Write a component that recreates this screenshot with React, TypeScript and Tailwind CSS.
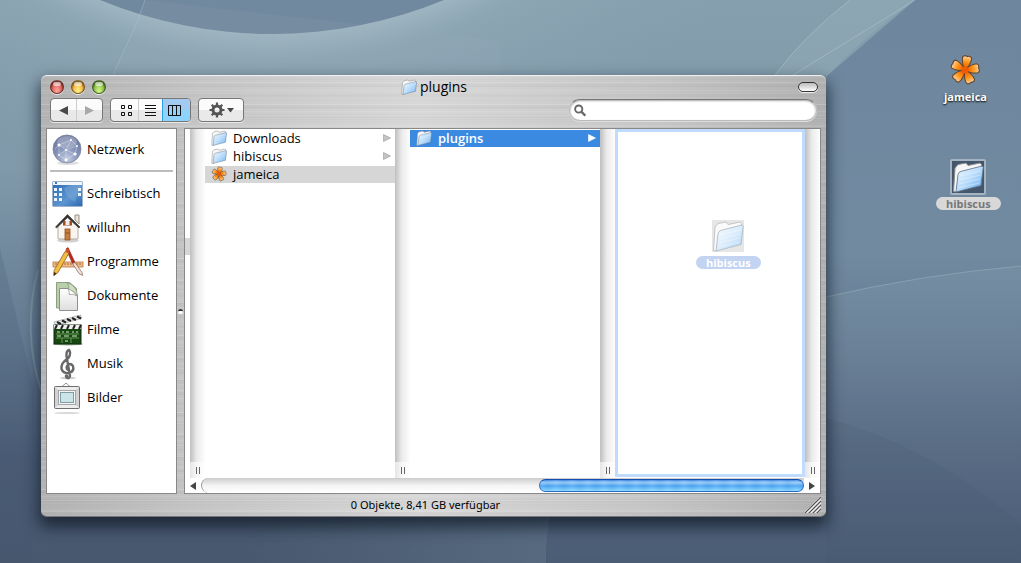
import { useState } from "react";
import type { ReactNode } from "react";

const FolderIcon = ({ size = 16 }: { size?: number }) => (
  <svg width={size} height={size} viewBox="0 0 32 32">
    <defs>
      <linearGradient id="folderFront" x1="0" y1="0" x2="1" y2="1">
        <stop offset="0" stopColor="#f2faff" />
        <stop offset="0.5" stopColor="#b9dcfb" />
        <stop offset="1" stopColor="#5fa9f2" />
      </linearGradient>
    </defs>
    <path
      d="M1.500 30.500L3 7l3-3.500 8-1.500 2 2.500L28 2l1.500 1.500V7L4 31z"
      fill="#f6f6f6"
      stroke="#8b8b8b"
      strokeWidth="1"
    />
    <path
      d="M4 31L6 13.500Q6.500 11 9 10.400L30 5l1.300 1L29 24.500z"
      fill="url(#folderFront)"
      stroke="#66788c"
      strokeWidth="0.9"
    />
    <path
      d="M8 15l21-5M7.500 19l21-5M7 23l21-5M6.500 27l21-5"
      stroke="#fff"
      opacity="0.35"
    />
  </svg>
);

const FlowerIcon = ({ size = 16 }: { size?: number }) => (
  <svg width={size} height={size} viewBox="0 0 32 32">
    <defs>
      <radialGradient
        id="petal"
        gradientUnits="userSpaceOnUse"
        cx="16"
        cy="16"
        r="15"
      >
        <stop offset="0" stopColor="#e84a00" />
        <stop offset="0.55" stopColor="#ff9417" />
        <stop offset="1" stopColor="#ffd9b0" />
      </radialGradient>
    </defs>
    {[10, 82, 154, 226, 298].map((angle) => (
      <path
        key={angle}
        d="M16 17C13 12 11 8 11.500 3.500Q12.500 1 16 2.200 19.500 1 20.500 3.500C21 8 19 12 16 17z"
        transform={`rotate(${angle} 16 16)`}
        fill="url(#petal)"
        stroke="#5d4631"
        strokeWidth="1.1"
      />
    ))}
    <circle cx="16" cy="16" r="3.5" fill="#ef5a05" />
  </svg>
);

const NetworkIcon = () => (
  <svg width="32" height="32" viewBox="0 0 32 32">
    <defs>
      <radialGradient id="globe" cx="0.5" cy="0.85" r="0.85">
        <stop offset="0" stopColor="#c3cce2" />
        <stop offset="0.5" stopColor="#8492b8" />
        <stop offset="1" stopColor="#66739c" />
      </radialGradient>
    </defs>
    <ellipse cx="16" cy="29" rx="11" ry="2" fill="#000" opacity="0.12" />
    <circle cx="15" cy="15" r="14" fill="url(#globe)" stroke="#7d849c" strokeWidth="0.8" />
    <ellipse cx="15" cy="8" rx="10" ry="6" fill="#fff" opacity="0.25" />
    <g stroke="#e8edf8" strokeWidth="0.6" fill="none" opacity="0.7">
      <path d="M7 11l12-5 6 6-2 8-9 6-7-5zM7 11l7 5 11-4M14 16l9 4M14 16v10M7 21l7-5M19 6l-5 10M3 15l4-4" />
    </g>
    <g fill="#fff">
      <circle cx="7" cy="11" r="1.6" />
      <circle cx="19" cy="6" r="1.1" />
      <circle cx="25" cy="12" r="1" />
      <circle cx="14" cy="16" r="1.1" />
      <circle cx="23" cy="20" r="1.6" />
      <circle cx="7" cy="21" r="1" />
      <circle cx="14" cy="26" r="1.4" />
    </g>
  </svg>
);

const DesktopIcon = () => (
  <svg width="32" height="32" viewBox="0 0 32 32">
    <defs>
      <linearGradient id="screen" x1="0" y1="0" x2="1" y2="1">
        <stop offset="0" stopColor="#2c68b2" />
        <stop offset="0.6" stopColor="#5c95cf" />
        <stop offset="1" stopColor="#2b68b3" />
      </linearGradient>
    </defs>
    <rect x="0.5" y="3.5" width="30" height="25" rx="1" fill="url(#screen)" stroke="#9db3cb" />
    <path d="M12 10Q22 4 29 8L23 24Q14 20 12 10z" fill="#89b5df" opacity="0.35" />
    <rect x="1" y="4" width="29" height="3" fill="#f2f6fa" />
    <rect x="3" y="4" width="2" height="2" fill="#3977c6" />
    <g fill="#e9f4ff">
      <rect x="2" y="10" width="3" height="3" />
      <rect x="7" y="10" width="3" height="3" />
      <rect x="2" y="15" width="3" height="3" />
      <rect x="7" y="15" width="3" height="3" />
      <rect x="2" y="20" width="3" height="3" />
      <rect x="7" y="20" width="3" height="3" />
      <rect x="26" y="10" width="3" height="3" />
      <rect x="26" y="15" width="3" height="3" />
    </g>
  </svg>
);

const HomeIcon = () => (
  <svg width="32" height="32" viewBox="0 0 32 32">
    <ellipse cx="16" cy="28.500" rx="11" ry="2" fill="#000" opacity="0.18" />
    <path d="M23 3h4v9l-4-4z" fill="#e9e2d8" stroke="#9a9087" />
    <path d="M6 14L16 5l10 9v13H6z" fill="#f8f5f0" stroke="#b5ada4" />
    <path d="M3.500 15L15.500 2.500 28 15l-1 1L15.500 5.500 4.500 16z" fill="#333" stroke="#3b352f" strokeWidth="0.6" />
    <rect x="11" y="9" width="9" height="4.500" fill="#a44a1c" />
    <rect x="13.500" y="9" width="4" height="4" fill="#e8eef2" />
    <rect x="13" y="17" width="5" height="11" fill="#c97c35" stroke="#8f5420" strokeWidth="0.8" />
    <path d="M13 21h5" stroke="#8f5420" />
  </svg>
);

const AppsIcon = () => (
  <svg width="32" height="32" viewBox="0 0 32 32">
    <rect x="1" y="16" width="30" height="5" fill="#f0b985" stroke="#b87b48" strokeWidth="0.8" />
    <path d="M4 17v2M7 17v2M10 17v2M13 17v2M16 17v2M19 17v2M22 17v2M25 17v2M28 17v2" stroke="#8a5a34" strokeWidth="0.8" />
    <path d="M14 3l2-1.500 7 15-2.500 1z" fill="#c3261b" stroke="#7c201a" strokeWidth="0.6" />
    <path d="M20.500 17.500l2.500-1 7 10 .5 3-3.500-2z" fill="#eee6dc" stroke="#8a5b50" strokeWidth="0.7" />
    <path d="M13 5.500l4 1.500L6 26.500l-4 3v-5z" fill="#f3bd45" stroke="#7e5415" strokeWidth="0.7" />
    <path d="M13 5.500l1.500-3 3 1.500-.5 3z" fill="#d5502f" />
    <path d="M2 26l2.500 1.500-3 2.500z" fill="#4a2113" />
  </svg>
);

const DocumentsIcon = () => (
  <svg width="32" height="32" viewBox="0 0 32 32">
    <defs>
      <linearGradient id="sheet" x1="0" y1="0" x2="0" y2="1">
        <stop offset="0" stopColor="#fff" />
        <stop offset="1" stopColor="#dedede" />
      </linearGradient>
    </defs>
    <path d="M4.500 2.500h13l7 6V28h-20z" fill="#b9ceaa" stroke="#8da081" />
    <path d="M7.500 8.500h9l9 7v15h-18z" fill="url(#sheet)" stroke="#909090" />
    <path d="M15 2.500q3 4 1.500 7 5 1 9 6-1-10-10.500-13z" fill="#cfdfc3" stroke="#7f9174" strokeWidth="0.7" />
    <path d="M16 8.500q2 4 1 6 4-1 8 1.500-3-5-9-7.500z" fill="#fff" stroke="#8c8f8a" strokeWidth="0.7" />
  </svg>
);

const MoviesIcon = () => (
  <svg width="32" height="32" viewBox="0 0 32 32">
    <ellipse cx="16" cy="30" rx="15" ry="1.5" fill="#1c4315" opacity="0.4" />
    <path d="M2 8L28.500 1l1 3.500L4 11.500z" fill="#eee" stroke="#777" strokeWidth="0.5" />
    <path d="M5 8l4 2M10 6.500l4 2M15 5l4 2M20 4l4 2M25 2.500l4 2" stroke="#222" strokeWidth="2" />
    <rect x="2" y="11" width="27" height="19" fill="#174812" stroke="#0d2f0b" />
    <rect x="2" y="11" width="27" height="4" fill="#eee" />
    <path d="M5 11l-2 4M11 11l-2 4M17 11l-2 4M23 11l-2 4M29 11l-2 4" stroke="#222" strokeWidth="2" />
    <path d="M4 20h23M4 24h23M10 24v5M19 24v5" stroke="#79ad62" strokeWidth="0.8" />
    <path d="M5 18h3M11 17v2M14 18h3M21 17v2M24 18h2M5 22h4M12 22h5M20 22h5M13 27h3" stroke="#d5ebc8" />
  </svg>
);

const MusicIcon = () => (
  <svg width="32" height="32" viewBox="0 0 32 32">
    <ellipse cx="16" cy="30" rx="8" ry="1.5" fill="#000" opacity="0.18" />
    <path
      d="M18 28Q17 31 14.500 29.500M18 28L14.500 8Q14 3 17 2q2.500 3-.5 8-8 5-7 11 2 5 8 4 5-2 3.500-7-3-4-6 0-1 3 1 4"
      fill="none"
      stroke="#68686a"
      strokeWidth="2.4"
      strokeLinecap="round"
    />
    <circle cx="14.500" cy="28" r="1.800" fill="#68686a" />
  </svg>
);

const PicturesIcon = () => (
  <svg width="32" height="32" viewBox="0 0 32 32">
    <ellipse cx="15" cy="31" rx="13" ry="1" fill="#000" opacity="0.15" />
    <path d="M10 4.500L14 1l4 3.500" fill="none" stroke="#999" />
    <rect x="2.500" y="4.500" width="25" height="22" rx="1" fill="#d2d2d2" stroke="#6f6f6f" />
    <path d="M3 5h24l-5 4H8zM3 26h24l-5-4H8z" fill="#f4f4f4" opacity="0.8" />
    <rect x="6.500" y="8.500" width="17" height="14" fill="#f6f6f6" stroke="#a5a5a5" />
    <rect x="8.500" y="10.500" width="13" height="10" fill="#cbe4e8" stroke="#7f9da3" />
  </svg>
);

const places: { name: string; icon: ReactNode }[] = [
  { name: "Schreibtisch", icon: <DesktopIcon /> },
  { name: "willuhn", icon: <HomeIcon /> },
  { name: "Programme", icon: <AppsIcon /> },
  { name: "Dokumente", icon: <DocumentsIcon /> },
  { name: "Filme", icon: <MoviesIcon /> },
  { name: "Musik", icon: <MusicIcon /> },
  { name: "Bilder", icon: <PicturesIcon /> },
];

const Wallpaper = () => (
  <svg
    className="absolute inset-0 h-full w-full"
    viewBox="0 0 1021 563"
    preserveAspectRatio="none"
  >
    <defs>
      <linearGradient id="sky" x1="0" y1="0" x2="0" y2="1">
        <stop offset="0" stopColor="#859fae" />
        <stop offset="0.3" stopColor="#8099aa" />
        <stop offset="0.62" stopColor="#61788f" />
        <stop offset="0.82" stopColor="#4b5c75" />
        <stop offset="1" stopColor="#48586f" />
      </linearGradient>
      <linearGradient id="side" x1="0" y1="0" x2="0" y2="1">
        <stop offset="0" stopColor="#6f879e" />
        <stop offset="0.45" stopColor="#718aa0" />
        <stop offset="0.75" stopColor="#5c7088" />
        <stop offset="1" stopColor="#4b5c75" />
      </linearGradient>
      <radialGradient
        id="halo"
        gradientUnits="userSpaceOnUse"
        cx="272"
        cy="-418"
        r="620"
      >
        <stop offset="0.725" stopColor="#a9bfc9" stopOpacity="0.75" />
        <stop offset="0.78" stopColor="#98b0bd" stopOpacity="0.4" />
        <stop offset="1" stopColor="#8aa3b3" stopOpacity="0" />
      </radialGradient>
      <linearGradient id="lowGlow" x1="0" y1="0" x2="1" y2="0">
        <stop offset="0" stopColor="#6f8a9b" stopOpacity="0" />
        <stop offset="1" stopColor="#718c9c" stopOpacity="0.35" />
      </linearGradient>
      <linearGradient id="arcGlow" x1="0" y1="0" x2="0" y2="1">
        <stop offset="0" stopColor="#7f98aa" stopOpacity="0.35" />
        <stop offset="0.6" stopColor="#7f98aa" stopOpacity="0" />
      </linearGradient>
    </defs>
    <rect width="1021" height="563" fill="url(#sky)" />
    <path d="M915 0L828 75 700 280 547 517V563H1021V0z" fill="url(#side)" />
    <circle cx="272" cy="-418" r="620" fill="url(#halo)" />
    <circle cx="272" cy="-418" r="452" fill="#71899f" />
    <path d="M145 0L113 75H500V40z" fill="#a0b7c3" opacity="0.08" />
    <path d="M145 0l-7 20-25 55" fill="none" stroke="#b0c5cf" opacity="0.4" />
    <path d="M850 0Q805 35 775 75h53Q860 40 915 0z" fill="#a3bac5" opacity="0.25" />
    <path d="M850 0Q805 35 775 75M915 0Q850 40 793 75" fill="none" stroke="#b9ccd4" opacity="0.45" />
    <path d="M0 248Q16 315 34 390L31 563H0z" fill="#43546d" opacity="0.2" />
    <path d="M38 270Q22 330 41 390" fill="none" stroke="#a1b5c0" strokeWidth="2" opacity="0.35" />
    <path d="M826 297Q920 275 1021 266V563H826z" fill="url(#arcGlow)" />
    <path d="M826 297Q920 275 1021 266" fill="none" stroke="#a9bdc9" opacity="0.4" />
    <path d="M826 418Q940 450 1021 525V563H826z" fill="#43536c" opacity="0.14" />
    <path d="M250 563V510h300q-4 26-4 53z" fill="url(#lowGlow)" />
  </svg>
);

const Splitter = () => (
  <div className="flex w-[15px] shrink-0 flex-col bg-linear-to-r from-[#bfbfbf] via-[#ebebeb] via-45% to-[#fdfdfd]">
    <div className="mt-auto flex h-4 items-center justify-center gap-0.5 bg-white/60">
      <span className="h-[7px] w-px bg-[#666]" />
      <span className="h-[7px] w-px bg-[#666]" />
    </div>
  </div>
);

interface EntryProps {
  name: string;
  icon: ReactNode;
  className?: string;
  arrow?: string;
}

const Entry = ({ name, icon, className = "text-black", arrow }: EntryProps) => (
  <li className="mt-px">
    <button className={`flex h-[17px] w-full items-start pl-1.5 pr-1 ${className}`}>
      <span className="flex w-[22px]">{icon}</span>
      <span className="leading-4">{name}</span>
      {arrow && (
        <svg width="8" height="8" viewBox="0 0 8 8" className="mt-1 ml-auto">
          <path d="M0.5 0.5L7.5 4 0.5 7.5z" fill={arrow} stroke={arrow === "#fff" ? "#fff" : "#999"} strokeWidth="0.6" />
        </svg>
      )}
    </button>
  </li>
);

const Light = ({ label, className }: { label: string; className: string }) => (
  <button
    aria-label={label}
    className={`relative h-3.5 w-3.5 rounded-full border border-black/50 shadow-[inset_0_2px_2px_rgba(0,0,0,0.5),0_1px_0_#eee] ${className}`}
  >
    <span className="absolute inset-x-0.5 top-px h-1 rounded-full bg-white/60" />
  </button>
);

const toolButton =
  "flex h-6 overflow-hidden rounded border border-[#777] bg-linear-to-b from-[#fbfbfb] from-50% to-[#e9e9e9] to-50% shadow-[0_1px_0_#e8e8e8]";

const App = () => {
  const [query, setQuery] = useState("");

  return (
    <div className="relative flex min-h-screen w-full overflow-hidden font-['Open_Sans','Noto_Sans',sans-serif] text-[13px] text-black">
      <Wallpaper />
      <main className="relative mt-[75px] mb-[46px] ml-[41px] flex min-w-0 flex-1 flex-col rounded-md border-t border-b border-t-[#f0f0f0] border-b-[#777] bg-[repeating-linear-gradient(180deg,rgba(255,255,255,0.08)_0_1px,transparent_1px_3px,rgba(0,0,0,0.02)_3px_4px,transparent_4px_7px),repeating-linear-gradient(180deg,transparent_0_6px,rgba(255,255,255,0.1)_6px_7px,rgba(0,0,0,0.02)_7px_11px),linear-gradient(90deg,#b4b4b4,#c6c6c6_20%,#d8d8d8_48%,#c6c6c6_78%,#b2b2b2)] px-[5px] shadow-[0_8px_16px_2px_rgba(5,12,25,0.65)]">
        <header>
          <div className="flex h-[22px] items-center pr-[3px] pl-1">
            <div className="flex flex-1 gap-[7px]">
              <Light label="Schließen" className="bg-radial-[at_50%_85%] from-[#ffaaa0] to-[#c8302a]" />
              <Light label="Minimieren" className="bg-radial-[at_50%_85%] from-[#fff28a] to-[#ef9010]" />
              <Light label="Zoomen" className="bg-radial-[at_50%_85%] from-[#d6f78a] to-[#5da11c]" />
            </div>
            <h1 className="flex items-center gap-[3px] text-sm">
              <FolderIcon />
              plugins
            </h1>
            <div className="flex flex-1 justify-end">
              <button
                aria-label="Symbolleiste"
                className="h-2.5 w-5 rounded-full border border-[#333] bg-linear-to-b from-[#bbb] to-white shadow-[0_1px_0_#eee]"
              />
            </div>
          </div>
          <div className="flex h-[30px] items-start gap-[7px] px-1">
            <div className={toolButton}>
              <button aria-label="Zurück" className="flex w-[26px] items-center justify-center border-r border-[#ccc]">
                <svg width="9" height="9" viewBox="0 0 9 9">
                  <path d="M9 0v9L0 4.5z" fill="#4a4a4a" />
                </svg>
              </button>
              <button aria-label="Vorwärts" className="flex w-[25px] items-center justify-center">
                <svg width="9" height="9" viewBox="0 0 9 9">
                  <path d="M0 0v9l9-4.5z" fill="#a8a8a8" />
                </svg>
              </button>
            </div>
            <div className={toolButton}>
              <button aria-label="Symbole" className="flex w-7 items-center justify-end border-r border-[#ccc] pr-[5px]">
                <svg width="12" height="11" viewBox="0 0 12 11" fill="none" stroke="#111">
                  <path d="M.5.5h3v3h-3zM7.500.5h3v3h-3zM.5 7.500h3v3h-3zM7.500 7.500h3v3h-3z" />
                </svg>
              </button>
              <button aria-label="Liste" className="flex w-[23px] items-center justify-center">
                <svg width="11" height="11" viewBox="0 0 11 11" stroke="#111">
                  <path d="M0 .5h11M0 3.5h11M0 7.5h11M0 10.5h11" />
                </svg>
              </button>
              <button
                aria-label="Spalten"
                aria-pressed="true"
                className="flex w-7 items-center border-l border-[#2e9ee8] bg-linear-to-b from-[#a3caf0] from-50% to-[#8ed3fc] to-50% pl-[5px]"
              >
                <svg width="13" height="11" viewBox="0 0 13 11" fill="none" stroke="#111">
                  <path d="M.5.5h12v10H.5zM4.5.5v10M8.5.5v10" />
                </svg>
              </button>
            </div>
            <button aria-label="Aktion" className={`${toolButton} w-[46px] items-center justify-center gap-0.5`}>
              <svg width="16" height="16" viewBox="0 0 16 16">
                <circle cx="8" cy="8" r="4" fill="none" stroke="#555" strokeWidth="3" />
                <path d="M8 .5v3M8 12.500v3M.5 8h3M12.500 8h3M2.700 2.700l2 2M11.300 11.300l2 2M13.300 2.700l-2 2M4.700 11.300l-2 2" stroke="#555" strokeWidth="2.200" />
              </svg>
              <svg width="7" height="5" viewBox="0 0 7 5">
                <path d="M0 0h7L3.500 4.500z" fill="#4a4a4a" />
              </svg>
            </button>
            <label className="mt-px ml-auto flex h-[22px] w-[248px] items-center rounded-full border border-[#bbb] border-t-[#777] bg-white pl-1 shadow-[inset_0_1px_2px_rgba(0,0,0,0.35),0_1px_0_#ddd]">
              <svg width="13" height="13" viewBox="0 0 13 13" fill="none" stroke="#666">
                <circle cx="5" cy="5" r="3.800" strokeWidth="2" />
                <path d="M8 8l4 4" strokeWidth="2.400" />
              </svg>
              <input
                type="text"
                aria-label="Suchen"
                value={query}
                onChange={(e) => setQuery(e.target.value)}
                className="w-full min-w-0 bg-transparent px-2 outline-none"
              />
            </label>
          </div>
        </header>

        <div className="flex min-h-0 flex-1">
          <nav className="w-[131px] shrink-0 border border-[#888] bg-white">
            <button className="flex h-[41px] w-full items-center gap-[3px] pl-[5px]">
              <NetworkIcon />
              Netzwerk
            </button>
            <hr className="mx-[3px] mb-[5px] border-t-2 border-[#bdbdbd]" />
            <ul>
              {places.map((place) => (
                <li key={place.name}>
                  <button className="flex h-[34px] w-full items-center gap-[3px] pl-[5px]">
                    {place.icon}
                    {place.name}
                  </button>
                </li>
              ))}
            </ul>
          </nav>
          <div className="flex w-[7px] shrink-0 items-center justify-center">
            <span className="h-[5px] w-[5px] rounded-full border-t-2 border-[#333] bg-white" />
          </div>
          <section className="flex min-w-0 flex-1 flex-col border border-[#888] bg-white">
            <div className="flex min-h-0 flex-1">
              <div className="w-[5px] shrink-0 pt-[109px]">
                <div className="h-[17px] bg-[#d6d6d6]" />
              </div>
              <Splitter />
              <ul className="w-[190px] shrink-0">
                <Entry name="Downloads" icon={<FolderIcon />} arrow="#c4c4c4" />
                <Entry name="hibiscus" icon={<FolderIcon />} arrow="#c4c4c4" />
                <Entry name="jameica" icon={<FlowerIcon />} className="bg-[#d6d6d6] text-black" />
              </ul>
              <Splitter />
              <ul className="w-[190px] shrink-0">
                <Entry
                  name="plugins"
                  icon={<FolderIcon />}
                  className="bg-[#3b8ae2] font-semibold text-white"
                  arrow="#fff"
                />
              </ul>
              <Splitter />
              <div className="relative mb-px min-w-0 flex-1 border-3 border-[#c0dcfc]">
                {/* item being dragged over the column */}
                <div className="absolute top-[88px] left-[78px] flex flex-col items-center gap-1 opacity-50">
                  <div className="bg-[#cfcfcf]">
                    <FolderIcon size={32} />
                  </div>
                  <span className="rounded-full bg-[#86abe6] px-2.5 text-[11px] leading-[13px] font-bold text-white">
                    hibiscus
                  </span>
                </div>
              </div>
              <Splitter />
            </div>
            <div className="flex h-[15px]">
              <button aria-label="Nach links" className="flex w-4 items-center justify-center">
                <svg width="6" height="8" viewBox="0 0 6 8">
                  <path d="M6 0v8L0 4z" fill="#444" />
                </svg>
              </button>
              <div className="flex-1 rounded-l-full border-l border-[#999] bg-linear-to-b from-[#ccc] via-[#f4f4f4] to-white pt-px">
                <div className="ml-auto h-[13px] w-[44%] rounded-full border border-[#2a6cc4] border-t-[#0f4fb4] bg-[repeating-linear-gradient(90deg,rgba(255,255,255,0.07),rgba(0,60,170,0.06)_8px,rgba(255,255,255,0.07)_16px),linear-gradient(180deg,#3d86e0,#9acdfa_20%,#6db4f5_45%,#4ba4f5_52%,#8fdcff)]" />
              </div>
              <button aria-label="Nach rechts" className="flex w-4 items-center justify-center">
                <svg width="6" height="8" viewBox="0 0 6 8">
                  <path d="M0 0v8l6-4z" fill="#444" />
                </svg>
              </button>
            </div>
          </section>
        </div>

        <footer className="flex h-[22px] items-center text-[11px]">
          <p className="flex-1 text-center font-['Noto_Sans','Open_Sans',sans-serif]">0 Objekte, 8,41 GB verfügbar</p>
          <svg width="16" height="16" viewBox="0 0 16 16">
            <path d="M0 16L16 0M4 16L16 4M8 16l8-8M12 16l4-4" stroke="#555" />
            <path d="M2 16L16 2M6 16l10-10M10 16l6-6" stroke="#f0f0f0" />
          </svg>
        </footer>
      </main>

      <aside className="relative w-[195px] shrink-0 text-[11px] font-bold">
        <button className="absolute top-[54px] left-[118px] flex flex-col items-center gap-1">
          <FlowerIcon size={32} />
          <span className="leading-[13px] text-white [text-shadow:0_1px_2px_#000]">jameica</span>
        </button>
        <button className="absolute top-[159px] left-[110px] flex flex-col items-center gap-0.5">
          <span className="rounded-xs border-2 border-[#a4b3c2] bg-[#44566b]">
            <FolderIcon size={32} />
          </span>
          <span className="rounded-full bg-[#d8d8d8] px-2.5 leading-[13px] text-[#777]">
            hibiscus
          </span>
        </button>
      </aside>
    </div>
  );
};

export default App;
